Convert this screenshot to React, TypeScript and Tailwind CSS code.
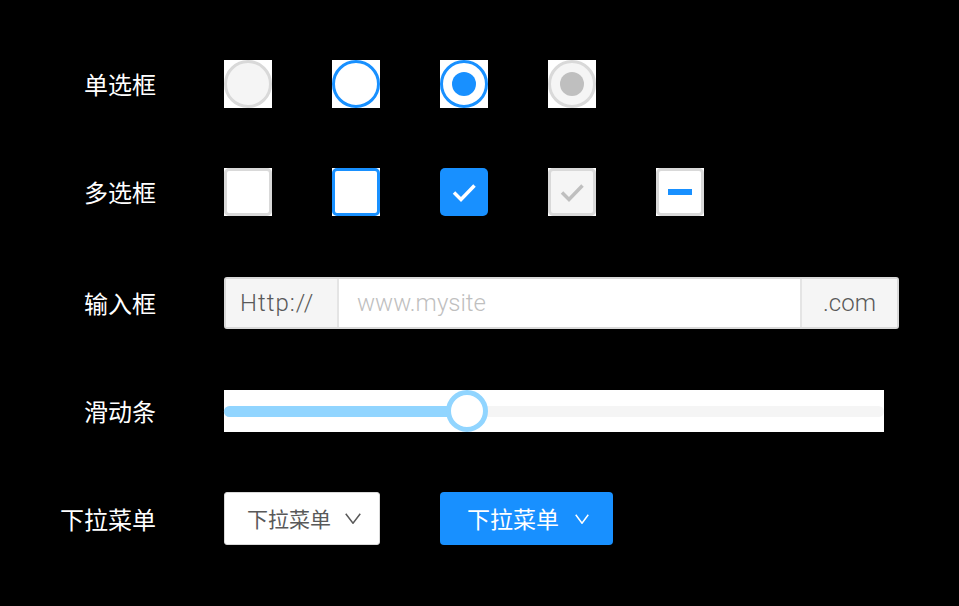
import React from 'react';

const cjk = "font-['Noto_Sans_CJK_SC',sans-serif]";

const Label = ({ text }: { text: string }) => (
  <div className={`w-[156px] shrink-0 text-right text-[24px] leading-none text-white ${cjk}`}>{text}</div>
);

const Check = ({ color }: { color: string }) => (
  <svg width="48" height="48" viewBox="0 0 48 48" className="absolute left-0 top-0">
    <polyline points="14,24.5 21,31.5 34.5,17.5" fill="none" stroke={color} strokeWidth="3.5" strokeLinejoin="miter" />
  </svg>
);

const Chevron = ({ color, w, h }: { color: string; w: number; h: number }) => (
  <svg width={w} height={h} viewBox={`0 0 ${w} ${h}`}>
    <polyline points={`0.75,0.75 ${w / 2},${h - 0.75} ${w - 0.75},0.75`} fill="none" stroke={color} strokeWidth="1.5" />
  </svg>
);

export default function App() {
  return (
    <div className="w-[959px] h-[606px] bg-black pt-[60px] flex flex-col">
      {/* 单选框 */}
      <div className="flex items-center h-[48px]">
        <Label text="单选框" />
        <div className="ml-[68px] flex gap-[60px]">
          <div className="w-12 h-12 bg-white">
            <div className="w-12 h-12 rounded-full border-[3px] border-[#d9d9d9] bg-[#f5f5f5]" />
          </div>
          <div className="w-12 h-12 bg-white">
            <div className="w-12 h-12 rounded-full border-[3px] border-[#1890ff] bg-white" />
          </div>
          <div className="w-12 h-12 bg-white">
            <div className="w-12 h-12 rounded-full border-[3px] border-[#1890ff] bg-white flex items-center justify-center">
              <div className="w-[24px] h-[24px] rounded-full bg-[#1890ff]" />
            </div>
          </div>
          <div className="w-12 h-12 bg-white">
            <div className="w-12 h-12 rounded-full border-[3px] border-[#d9d9d9] bg-[#f5f5f5] flex items-center justify-center">
              <div className="w-[24px] h-[24px] rounded-full bg-[#bfbfbf]" />
            </div>
          </div>
        </div>
      </div>

      {/* 多选框 */}
      <div className="flex items-center h-[48px] mt-[60px]">
        <Label text="多选框" />
        <div className="ml-[68px] flex gap-[60px]">
          <div className="w-12 h-12 bg-white">
            <div className="w-12 h-12 rounded-[5px] border-[3px] border-[#d9d9d9] bg-white" />
          </div>
          <div className="w-12 h-12 bg-white">
            <div className="w-12 h-12 rounded-[5px] border-[3px] border-[#1890ff] bg-white" />
          </div>
          <div className="relative w-12 h-12 rounded-[5px] bg-[#1890ff]">
            <Check color="#ffffff" />
          </div>
          <div className="relative w-12 h-12 bg-white">
            <div className="w-12 h-12 rounded-[5px] border-[3px] border-[#d9d9d9] bg-[#f5f5f5]" />
            <Check color="#bfbfbf" />
          </div>
          <div className="w-12 h-12 bg-white">
            <div className="w-12 h-12 rounded-[5px] border-[3px] border-[#d9d9d9] bg-white flex items-center justify-center">
              <div className="w-[24px] h-[6px] bg-[#1890ff]" />
            </div>
          </div>
        </div>
      </div>

      {/* 输入框 */}
      <div className="flex items-center h-[52px] mt-[61px]">
        <Label text="输入框" />
        <div className="ml-[68px] flex w-[675px] h-[52px] border-2 border-[#d9d9d9] rounded-[3px] bg-white font-['Roboto',sans-serif] font-light text-[24px] leading-none">
          <div className="w-[113px] shrink-0 flex items-center pl-[14px] tracking-[1px] bg-[#f5f5f5] border-r-2 border-[#e4e4e4] text-[#595959]">
            Http://
          </div>
          <div className="flex-1 flex items-center pl-[18px] text-[#bfbfbf]">www.mysite</div>
          <div className="w-[97px] shrink-0 flex items-center justify-center bg-[#f5f5f5] border-l-2 border-[#e4e4e4] text-[#595959]">
            .com
          </div>
        </div>
      </div>

      {/* 滑动条 */}
      <div className="flex items-center h-[42px] mt-[61px]">
        <Label text="滑动条" />
        <div className="ml-[68px] relative w-[660px] h-[42px] bg-white flex items-center">
          <div className="w-full h-[11px] rounded-full bg-[#f5f5f5]">
            <div className="w-[243px] h-[11px] rounded-full bg-[#91d5ff]" />
          </div>
          <div className="absolute left-[222px] top-0 w-[42px] h-[42px] rounded-full border-[5px] border-[#91d5ff] bg-white" />
        </div>
      </div>

      {/* 下拉菜单 */}
      <div className="flex items-center h-[53px] mt-[60px]">
        <Label text="下拉菜单" />
        <div className="ml-[68px] flex items-center gap-[60px]">
          <div className={`w-[156px] h-[53px] rounded-[3px] border border-[#d9d9d9] bg-white flex items-center pl-[22px] gap-[14px] text-[21px] leading-none text-[#595959] ${cjk}`}>
            <span>下拉菜单</span>
            <Chevron color="#595959" w={16} h={11} />
          </div>
          <div className={`w-[173px] h-[53px] rounded-[4px] bg-[#1890ff] flex items-center pl-[27px] gap-[16px] text-[23px] leading-none text-white ${cjk}`}>
            <span>下拉菜单</span>
            <Chevron color="#ffffff" w={14} h={10} />
          </div>
        </div>
      </div>
    </div>
  );
}
